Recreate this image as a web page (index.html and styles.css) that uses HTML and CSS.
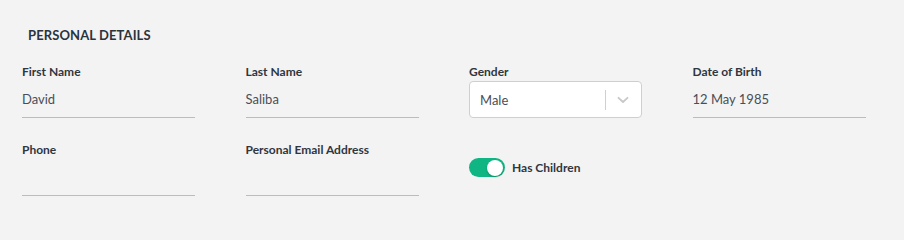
FILE: index.html
```html
<!DOCTYPE html>
<html lang="en">
<head>
<meta charset="utf-8">
<link rel="stylesheet" href="styles.css">
</head>
<body>
<section class="panel">
  <h2 class="title">PERSONAL DETAILS</h2>
  <div class="grid">
    <div class="field">
      <label class="label">First Name</label>
      <div class="input">David</div>
    </div>
    <div class="field">
      <label class="label">Last Name</label>
      <div class="input">Saliba</div>
    </div>
    <div class="field">
      <label class="label">Gender</label>
      <div class="select">
        <span class="select-value">Male</span>
        <span class="select-sep"></span>
        <svg class="chev" width="12" height="8" viewBox="0 0 12 8"><path d="M1.5 1.8 L6 6 L10.5 1.8" fill="none" stroke="#c8c8c8" stroke-width="1.8" stroke-linecap="round" stroke-linejoin="round"/></svg>
      </div>
    </div>
    <div class="field">
      <label class="label">Date of Birth</label>
      <div class="input">12 May 1985</div>
    </div>
    <div class="field">
      <label class="label">Phone</label>
      <div class="input"></div>
    </div>
    <div class="field">
      <label class="label">Personal Email Address</label>
      <div class="input"></div>
    </div>
    <div class="field toggle-field">
      <span class="toggle"><span class="knob"></span></span>
      <span class="toggle-label">Has Children</span>
    </div>
    <div class="field"></div>
  </div>
</section>
</body>
</html>
```
FILE: styles.css
```css
html, body {
  margin: 0;
  padding: 0;
  background: #f3f3f3;
}
body {
  font-family: "Lato", "Open Sans", "Liberation Sans", sans-serif;
  color: #2f3640;
}
.panel {
  box-sizing: border-box;
  height: 224px;
  overflow: hidden;
  padding: 27px 22px 0 22px;
}
.title {
  margin: 0 0 20px 6px;
  font-size: 13px;
  line-height: 17px;
  font-weight: 700;
  color: #2b333d;
  letter-spacing: 0.1px;
}
.grid {
  display: grid;
  grid-template-columns: repeat(4, 173px);
  column-gap: 50.5px;
  row-gap: 24px;
}
.field {
  display: flex;
  flex-direction: column;
}
.label {
  font-size: 12px;
  line-height: 15px;
  font-weight: 700;
  color: #2f3640;
  margin-bottom: 2px;
}
.input {
  box-sizing: border-box;
  height: 37px;
  border-bottom: 1px solid #bcbcbc;
  font-size: 13px;
  line-height: 36px;
  color: #474f58;
}
.select {
  box-sizing: border-box;
  height: 37px;
  width: 173px;
  background: #fff;
  border: 1px solid #cfcfcf;
  border-radius: 4px;
  display: flex;
  align-items: center;
  padding-left: 10px;
}
.select-value {
  flex: 1;
  font-size: 13px;
  color: #474f58;
}
.select-sep {
  width: 1px;
  height: 20px;
  background: #d0d0d0;
  margin-right: 11px;
}
.chev {
  margin-right: 12px;
}
.toggle-field {
  flex-direction: row;
  align-items: center;
  padding-top: 16px;
  align-self: start;
}
.toggle {
  box-sizing: border-box;
  width: 36px;
  height: 19px;
  border-radius: 10px;
  background: #0fb683;
  display: flex;
  align-items: center;
  justify-content: flex-end;
  padding-right: 2px;
}
.knob {
  width: 16px;
  height: 16px;
  border-radius: 50%;
  background: #fff;
  box-shadow: 0 1px 2px rgba(0,0,0,0.25);
}
.toggle-label {
  margin-left: 7px;
  font-size: 12px;
  font-weight: 700;
  color: #2f3640;
}
```
